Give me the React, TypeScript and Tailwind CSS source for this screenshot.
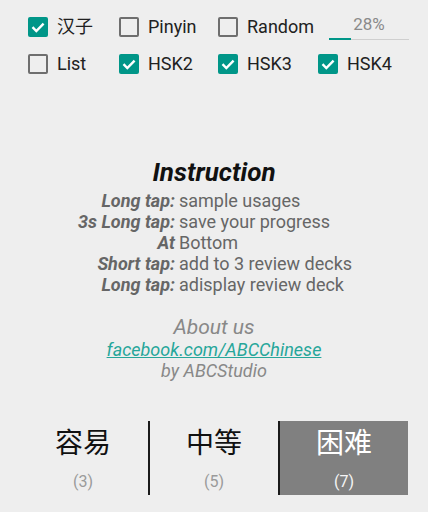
import React from "react";

const font = { fontFamily: "Roboto, 'Noto Sans CJK SC', sans-serif" };

const Box = ({ checked }: { checked: boolean }) =>
  checked ? (
    <span className="flex h-5 w-5 items-center justify-center rounded-[2px] bg-[#009688]">
      <svg viewBox="0 0 20 20" className="h-5 w-5">
        <path d="M4.5 10.2 L8.3 14 L15.6 6.6" fill="none" stroke="#fff" strokeWidth="2.4" />
      </svg>
    </span>
  ) : (
    <span className="h-5 w-5 rounded-[2px] border-2 border-[#6e6e6e]" />
  );

const Check = ({ label, checked, w }: { label: string; checked: boolean; w: string }) => (
  <div className={`flex h-5 items-center gap-[9px] ${w}`}>
    <Box checked={checked} />
    <span className="text-[18px] leading-none text-[#212121]">{label}</span>
  </div>
);

const rows: [string, string][] = [
  ["Long tap:", "sample usages"],
  ["3s Long tap:", "save your progress"],
  ["At", "Bottom"],
  ["Short tap:", "add to 3 review decks"],
  ["Long tap:", "adisplay review deck"],
];

const Level = ({ name, count, active, divider }: { name: string; count: string; active?: boolean; divider?: boolean }) => (
  <div
    className={`flex w-[130px] flex-col items-center ${divider ? "border-l-2 border-[#1a1a1a]" : ""} ${
      active ? "bg-[#808080] text-white" : "text-[#111]"
    }`}
  >
    <span className="mt-[6px] text-[28px] leading-[34px]">{name}</span>
    <span className={`mt-[11px] text-[16px] leading-[20px] ${active ? "text-[#f5f5f5]" : "text-[#9a9a9a]"}`}>{count}</span>
  </div>
);

export default function App() {
  return (
    <div className="h-[512px] w-[428px] overflow-hidden bg-[#eeeeee]" style={font}>
      <div className="flex flex-col gap-[17px] pl-[28px] pt-[17px]">
        <div className="flex h-5 items-center">
          <Check label="汉子" checked w="w-[91px]" />
          <Check label="Pinyin" checked={false} w="w-[99px]" />
          <Check label="Random" checked={false} w="w-[111px]" />
          <div className="flex w-[80px] flex-col items-center">
            <span className="text-[17px] leading-[20px] text-[#8a8a8a]">28%</span>
            <div className="mt-[4px] flex h-[2px] w-full items-end">
              <div className="h-[2px] w-[22px] bg-[#009688]" />
              <div className="h-px flex-1 bg-[#cfcfcf]" />
            </div>
          </div>
        </div>
        <div className="flex h-5 items-center">
          <Check label="List" checked={false} w="w-[91px]" />
          <Check label="HSK2" checked w="w-[99px]" />
          <Check label="HSK3" checked w="w-[100px]" />
          <Check label="HSK4" checked w="w-[100px]" />
        </div>
      </div>

      <div className="mt-[83px] flex flex-col items-center">
        <h1 className="text-[26px] font-bold italic leading-[30px] text-[#111]">Instruction</h1>
        <div className="mt-[3px] grid w-full grid-cols-[175px_1fr] gap-x-[4px] text-[18px] leading-[21px] text-[#666]">
          {rows.map(([k, v], i) => (
            <React.Fragment key={i}>
              <span className="text-right font-bold italic">{k}</span>
              <span>{v}</span>
            </React.Fragment>
          ))}
        </div>
        <span className="mt-[20px] text-[21px] italic leading-[24px] text-[#888]">About us</span>
        <span className="text-[18px] italic leading-[21px] text-[#26a69a] underline">facebook.com/ABCChinese</span>
        <span className="text-[18px] italic leading-[21px] text-[#888]">by ABCStudio</span>
      </div>

      <div className="mt-[40px] flex h-[74px] pl-[18px]">
        <Level name="容易" count="(3)" />
        <Level name="中等" count="(5)" divider />
        <Level name="困难" count="(7)" active divider />
      </div>
    </div>
  );
}
